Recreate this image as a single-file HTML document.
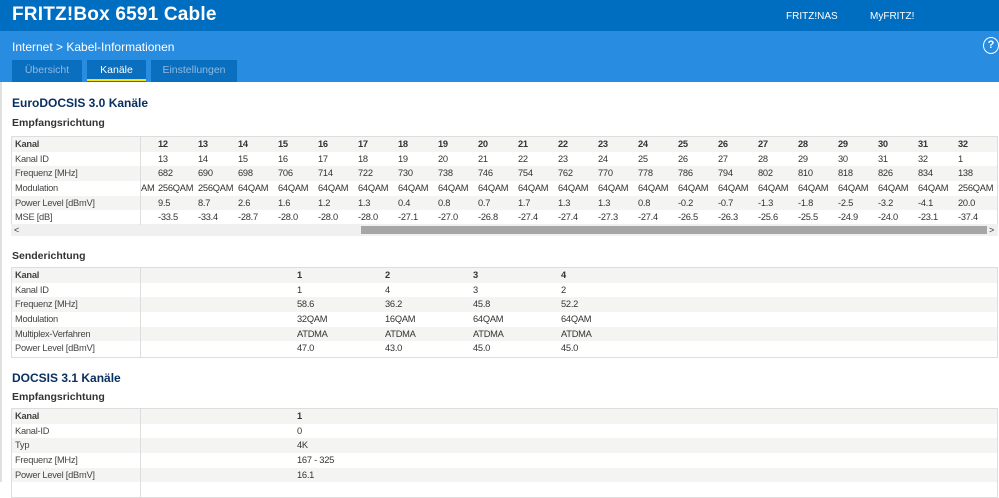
<!DOCTYPE html>
<html><head><meta charset="utf-8"><style>
*{margin:0;padding:0;box-sizing:border-box}
body{width:999px;height:482px;overflow:hidden;background:#fff;font-family:"Liberation Sans",sans-serif;color:#333;position:relative}
.top{position:absolute;left:0;top:0;width:999px;height:31px;background:#006ec0}
.top h1{position:absolute;left:12px;top:4px;font-size:19px;color:#fff;font-weight:bold;letter-spacing:0.2px}
.top .l{position:absolute;top:11px;font-size:10px;color:#fff}
.band{position:absolute;left:0;top:31px;width:999px;height:51px;background:#288ce0}
.crumb{position:absolute;left:12px;top:9px;color:#fff;font-size:12px}
.help{position:absolute;left:983px;top:6px;width:16px;height:17px;border:1.5px solid #fff;border-radius:50%;color:#fff;font-size:11px;font-weight:bold;text-align:center;line-height:14px}
.tab{position:absolute;top:29px;height:22px;background:#0a6fbf;color:#8fb9e0;font-size:10.5px;text-align:center;line-height:20px}
.tab.on{color:#fff}
.tab.on:after{content:"";position:absolute;left:0;right:0;bottom:1px;height:2px;background:#f5e400}
.lb{position:absolute;left:0;top:82px;width:2px;height:400px;background:#e0e0e0}
.h2{position:absolute;left:12px;font-size:12px;font-weight:bold;color:#0a3060}
.h3{position:absolute;left:12px;font-size:10.5px;font-weight:bold;color:#333}
.tbl{position:absolute;left:11px;width:987px;border:1px solid #ddd;overflow:hidden}
.r{height:14.7px;position:relative;font-size:9.3px;letter-spacing:-0.25px;line-height:14.7px;white-space:nowrap}
.r:nth-child(even){background:#f4f4f2}
.r .k{position:absolute;left:3px;top:0;width:125px;color:#444}
.r.b .k,.r.b span{font-weight:bold}
.sep{position:absolute;top:0;bottom:0;width:1px;background:#ddd;z-index:2}
.r span{position:absolute;top:0}
.sb{position:absolute;left:11px;top:224px;width:987px;height:12px;background:#f0f0f0;font-size:9px;line-height:12px}
.thumb{position:absolute;left:350px;top:2px;width:626px;height:8px;background:#a6a6a6}
</style></head><body>
<div class="top"><h1>FRITZ!Box 6591 Cable</h1><span class="l" style="left:786px">FRITZ!NAS</span><span class="l" style="left:870px">MyFRITZ!</span></div>
<div class="band"><div class="crumb">Internet &gt; Kabel-Informationen</div><div class="help">?</div>
<div class="tab" style="left:12px;width:70px">Übersicht</div>
<div class="tab on" style="left:87px;width:59px">Kanäle</div>
<div class="tab" style="left:151px;width:86px">Einstellungen</div></div>
<div class="lb"></div>
<div class="h2" style="top:96px">EuroDOCSIS 3.0 Kanäle</div>
<div class="h3" style="top:117px">Empfangsrichtung</div>
<div class="tbl" style="top:136px;height:89px;border-bottom:none">
<div class="sep" style="left:128px"></div>
<div class="r b"><div class="k">Kanal</div><span style="left:146px">12</span><span style="left:186px">13</span><span style="left:226px">14</span><span style="left:266px">15</span><span style="left:306px">16</span><span style="left:346px">17</span><span style="left:386px">18</span><span style="left:426px">19</span><span style="left:466px">20</span><span style="left:506px">21</span><span style="left:546px">22</span><span style="left:586px">23</span><span style="left:626px">24</span><span style="left:666px">25</span><span style="left:706px">26</span><span style="left:746px">27</span><span style="left:786px">28</span><span style="left:826px">29</span><span style="left:866px">30</span><span style="left:906px">31</span><span style="left:946px">32</span></div>
<div class="r"><div class="k">Kanal ID</div><span style="left:146px">13</span><span style="left:186px">14</span><span style="left:226px">15</span><span style="left:266px">16</span><span style="left:306px">17</span><span style="left:346px">18</span><span style="left:386px">19</span><span style="left:426px">20</span><span style="left:466px">21</span><span style="left:506px">22</span><span style="left:546px">23</span><span style="left:586px">24</span><span style="left:626px">25</span><span style="left:666px">26</span><span style="left:706px">27</span><span style="left:746px">28</span><span style="left:786px">29</span><span style="left:826px">30</span><span style="left:866px">31</span><span style="left:906px">32</span><span style="left:946px">1</span></div>
<div class="r"><div class="k">Frequenz [MHz]</div><span style="left:146px">682</span><span style="left:186px">690</span><span style="left:226px">698</span><span style="left:266px">706</span><span style="left:306px">714</span><span style="left:346px">722</span><span style="left:386px">730</span><span style="left:426px">738</span><span style="left:466px">746</span><span style="left:506px">754</span><span style="left:546px">762</span><span style="left:586px">770</span><span style="left:626px">778</span><span style="left:666px">786</span><span style="left:706px">794</span><span style="left:746px">802</span><span style="left:786px">810</span><span style="left:826px">818</span><span style="left:866px">826</span><span style="left:906px">834</span><span style="left:946px">138</span></div>
<div class="r"><div class="k">Modulation</div><span style="left:129px">AM</span><span style="left:146px">256QAM</span><span style="left:186px">256QAM</span><span style="left:226px">64QAM</span><span style="left:266px">64QAM</span><span style="left:306px">64QAM</span><span style="left:346px">64QAM</span><span style="left:386px">64QAM</span><span style="left:426px">64QAM</span><span style="left:466px">64QAM</span><span style="left:506px">64QAM</span><span style="left:546px">64QAM</span><span style="left:586px">64QAM</span><span style="left:626px">64QAM</span><span style="left:666px">64QAM</span><span style="left:706px">64QAM</span><span style="left:746px">64QAM</span><span style="left:786px">64QAM</span><span style="left:826px">64QAM</span><span style="left:866px">64QAM</span><span style="left:906px">64QAM</span><span style="left:946px">256QAM</span></div>
<div class="r"><div class="k">Power Level [dBmV]</div><span style="left:146px">9.5</span><span style="left:186px">8.7</span><span style="left:226px">2.6</span><span style="left:266px">1.6</span><span style="left:306px">1.2</span><span style="left:346px">1.3</span><span style="left:386px">0.4</span><span style="left:426px">0.8</span><span style="left:466px">0.7</span><span style="left:506px">1.7</span><span style="left:546px">1.3</span><span style="left:586px">1.3</span><span style="left:626px">0.8</span><span style="left:666px">-0.2</span><span style="left:706px">-0.7</span><span style="left:746px">-1.3</span><span style="left:786px">-1.8</span><span style="left:826px">-2.5</span><span style="left:866px">-3.2</span><span style="left:906px">-4.1</span><span style="left:946px">20.0</span></div>
<div class="r"><div class="k">MSE [dB]</div><span style="left:146px">-33.5</span><span style="left:186px">-33.4</span><span style="left:226px">-28.7</span><span style="left:266px">-28.0</span><span style="left:306px">-28.0</span><span style="left:346px">-28.0</span><span style="left:386px">-27.1</span><span style="left:426px">-27.0</span><span style="left:466px">-26.8</span><span style="left:506px">-27.4</span><span style="left:546px">-27.4</span><span style="left:586px">-27.3</span><span style="left:626px">-27.4</span><span style="left:666px">-26.5</span><span style="left:706px">-26.3</span><span style="left:746px">-25.6</span><span style="left:786px">-25.5</span><span style="left:826px">-24.9</span><span style="left:866px">-24.0</span><span style="left:906px">-23.1</span><span style="left:946px">-37.4</span></div>
</div>
<div class="sb"><span style="position:absolute;left:3px;top:0">&lt;</span><div class="thumb"></div><span style="position:absolute;left:978px;top:0">&gt;</span></div>
<div class="h3" style="top:250px">Senderichtung</div>
<div class="tbl" style="top:267px;height:91px">
<div class="sep" style="left:128px"></div>
<div class="r b"><div class="k">Kanal</div><span style="left:285px">1</span><span style="left:373px">2</span><span style="left:461px">3</span><span style="left:549px">4</span></div>
<div class="r"><div class="k">Kanal ID</div><span style="left:285px">1</span><span style="left:373px">4</span><span style="left:461px">3</span><span style="left:549px">2</span></div>
<div class="r"><div class="k">Frequenz [MHz]</div><span style="left:285px">58.6</span><span style="left:373px">36.2</span><span style="left:461px">45.8</span><span style="left:549px">52.2</span></div>
<div class="r"><div class="k">Modulation</div><span style="left:285px">32QAM</span><span style="left:373px">16QAM</span><span style="left:461px">64QAM</span><span style="left:549px">64QAM</span></div>
<div class="r"><div class="k">Multiplex-Verfahren</div><span style="left:285px">ATDMA</span><span style="left:373px">ATDMA</span><span style="left:461px">ATDMA</span><span style="left:549px">ATDMA</span></div>
<div class="r"><div class="k">Power Level [dBmV]</div><span style="left:285px">47.0</span><span style="left:373px">43.0</span><span style="left:461px">45.0</span><span style="left:549px">45.0</span></div>
</div>
<div class="h2" style="top:371px">DOCSIS 3.1 Kanäle</div>
<div class="h3" style="top:391px">Empfangsrichtung</div>
<div class="tbl" style="top:408px;height:90px">
<div class="sep" style="left:128px"></div>
<div class="r b"><div class="k">Kanal</div><span style="left:285px">1</span></div>
<div class="r"><div class="k">Kanal-ID</div><span style="left:285px">0</span></div>
<div class="r"><div class="k">Typ</div><span style="left:285px">4K</span></div>
<div class="r"><div class="k">Frequenz [MHz]</div><span style="left:285px">167 - 325</span></div>
<div class="r"><div class="k">Power Level [dBmV]</div><span style="left:285px">16.1</span></div>
</div>
</body></html>
